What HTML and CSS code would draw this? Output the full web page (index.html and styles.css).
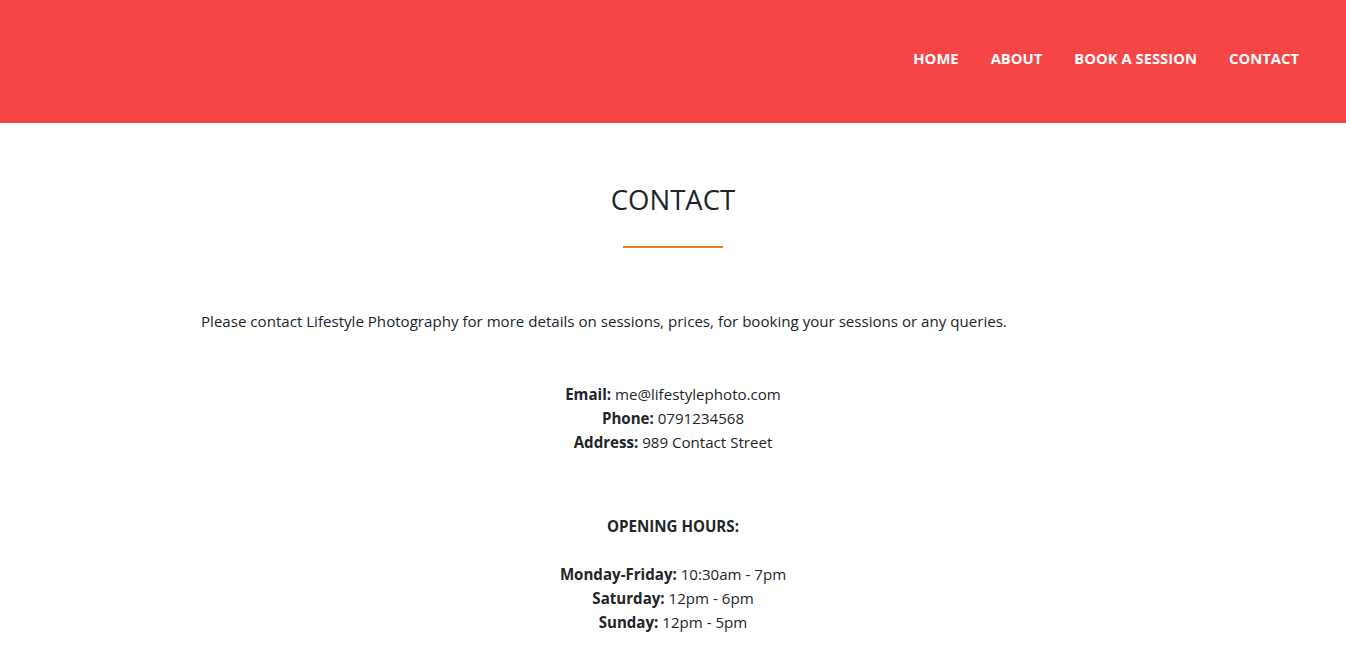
FILE: index.html
```html
<!DOCTYPE html>
<html lang="en">
<head>
<meta charset="utf-8">
<title>Contact - Lifestyle Photography</title>
<link rel="stylesheet" href="styles.css">
</head>
<body>
<header class="site-header">
  <nav class="main-nav">
    <a href="#" class="nav-link">HOME</a>
    <a href="#" class="nav-link">ABOUT</a>
    <a href="#" class="nav-link">BOOK A SESSION</a>
    <a href="#" class="nav-link">CONTACT</a>
  </nav>
</header>
<main class="content">
  <h1 class="page-title">CONTACT</h1>
  <div class="title-rule"></div>
  <p class="intro">Please contact Lifestyle Photography for more details on sessions, prices, for booking your sessions or any queries.</p>
  <div class="details">
    <div><b>Email:</b> me@lifestylephoto.com</div>
    <div><b>Phone:</b> 0791234568</div>
    <div><b>Address:</b> 989 Contact Street</div>
  </div>
  <div class="hours">
    <div class="hours-title"><b>OPENING HOURS:</b></div>
    <div><b>Monday-Friday:</b> 10:30am - 7pm</div>
    <div><b>Saturday:</b> 12pm - 6pm</div>
    <div><b>Sunday:</b> 12pm - 5pm</div>
  </div>
</main>
</body>
</html>
```
FILE: styles.css
```css
* { box-sizing: border-box; }
body {
  margin: 0;
  font-family: "Open Sans", "Noto Sans", sans-serif;
  font-size: 15.1px;
  line-height: 24px;
  color: #212529;
  background: #fff;
}
.site-header {
  background: #f54545;
  height: 123px;
  display: flex;
  align-items: center;
  justify-content: flex-end;
  padding-right: 47px;
}
.main-nav {
  display: flex;
  gap: 32px;
  margin-top: -7px;
}
.nav-link {
  color: #fff;
  text-decoration: none;
  font-weight: 700;
  font-size: 14.8px;
}
.content {
  display: flex;
  flex-direction: column;
  align-items: center;
  padding-top: 57px;
}
.page-title {
  margin: 0;
  font-size: 27.5px;
  font-weight: 500;
  line-height: 40px;
}
.title-rule {
  width: 100px;
  height: 2px;
  background: #e67e22;
  margin-top: 26px;
}
.intro {
  align-self: flex-start;
  margin: 61px 0 0 201px;
}
.details {
  text-align: center;
  margin-top: 49px;
}
.hours {
  text-align: center;
  margin-top: 60px;
}
.hours-title {
  margin-bottom: 24px;
}
b { font-weight: 700; }
```
